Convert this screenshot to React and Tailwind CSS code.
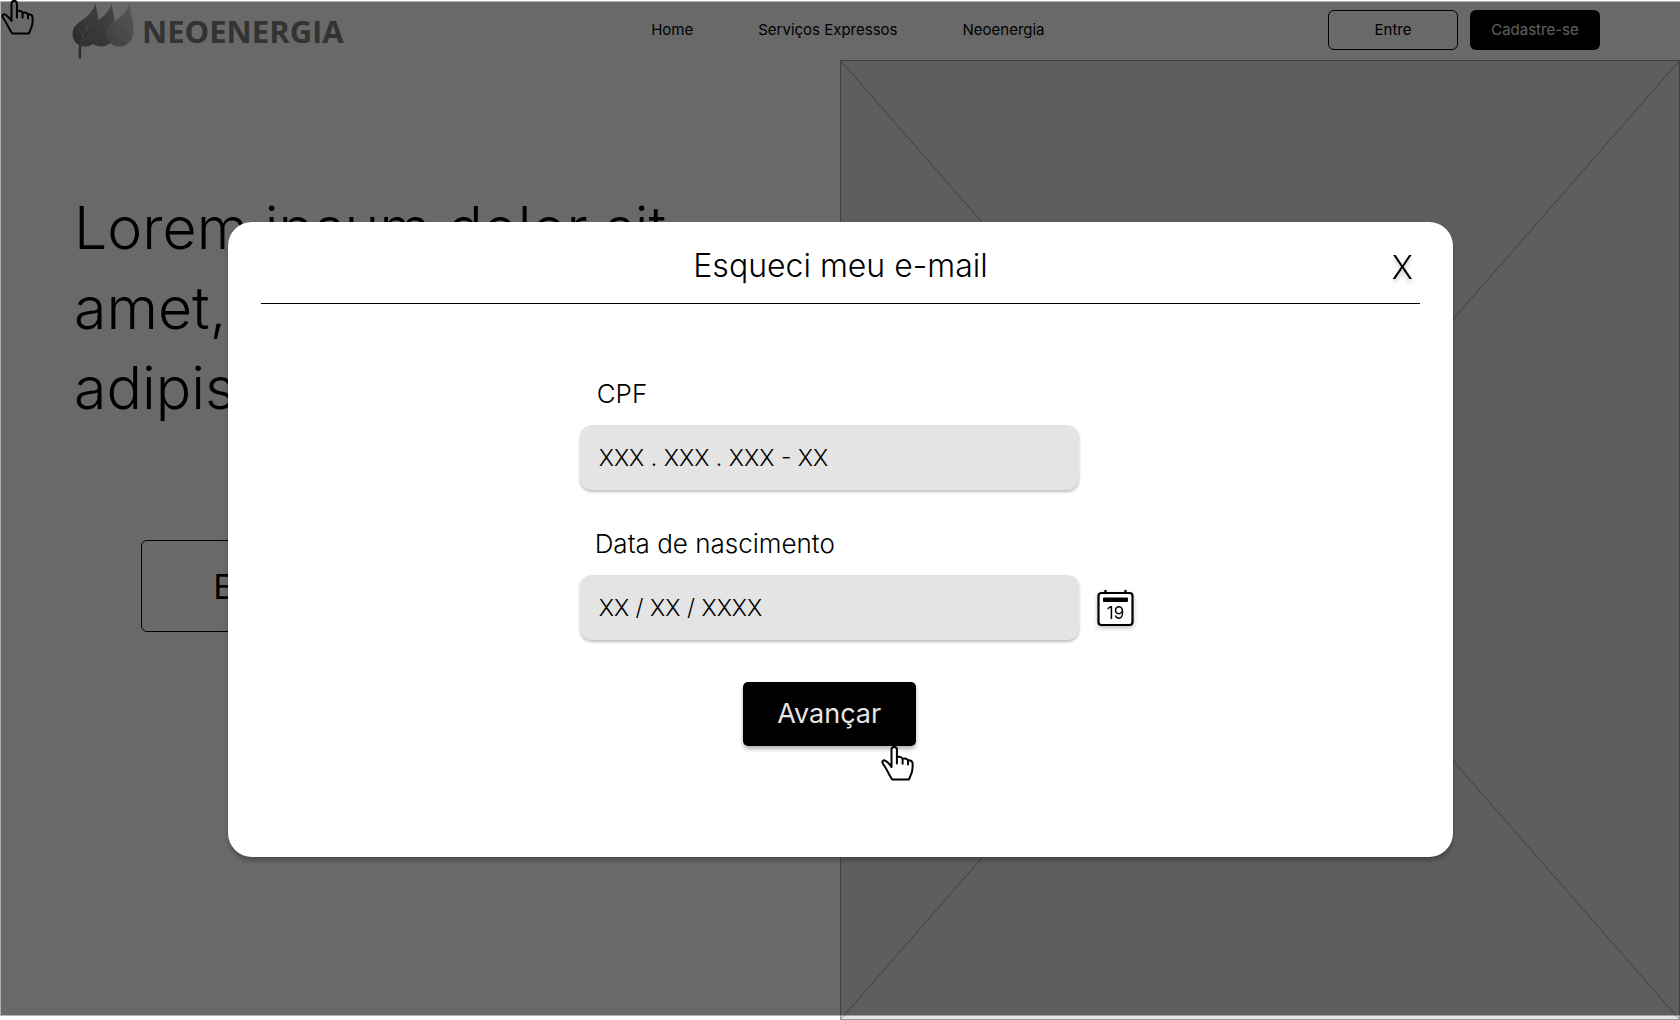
import React from "react";

function HandCursor({ className }) {
  return (
    <svg viewBox="0 0 34 36" fill="none" stroke="black" strokeWidth="2" strokeLinejoin="round" strokeLinecap="round" className={className} aria-hidden="true">
      <path d="M10.5 21V3.6a2.7 2.7 0 0 1 5.4 0V11c2.6-.6 4.900.2 5.700 1.700 2.500-.6 4.600.2 5.400 1.700 2.800-.3 4.700 1 4.700 3.800 0 4.600-.3 8.200-2.300 11.600L28 33.500H11.200L8.600 29.200C7 26 4.500 21.500 2 17.800 .4 15.200 2.400 13.600 4.600 14.800 7 16.200 9 18.600 10.500 21z" />
      <path d="M15.900 11v6.500M21.600 12.700v5M27 14.400v4" />
    </svg>
  );
}

function Leaf({ x, fill }) {
  return (
    <path
      transform={`translate(${x} 0)`}
      d="M23.500 2C24.500 10 28 20 27.500 32 26.500 40 20.500 45.500 13.500 45.500 6 45.500 .5 40 .5 33 .5 26 5 22.500 12.500 17.500 18.500 13 22 8 23.500 2z"
      fill={fill}
    />
  );
}

function Logo() {
  return (
    <a href="#inicio" className="flex items-start text-[#7c7c7c]" aria-label="Neoenergia">
      <svg viewBox="0 0 64 58" className="h-[58px] w-16 shrink-0" aria-hidden="true">
        <defs>
          <linearGradient id="leafDark" x1="0" y1="1" x2="1" y2="0">
            <stop offset="0" stopColor="#686868" />
            <stop offset="1" stopColor="#a0a0a0" />
          </linearGradient>
          <linearGradient id="leafMid" x1="0" y1="1" x2="0.6" y2="0">
            <stop offset="0" stopColor="#747474" />
            <stop offset="1" stopColor="#a8a8a8" />
          </linearGradient>
          <linearGradient id="leafLight" x1="0" y1="1" x2="0.6" y2="0">
            <stop offset="0" stopColor="#969696" />
            <stop offset="1" stopColor="#cfcfcf" />
          </linearGradient>
        </defs>
        <Leaf x={16} fill="url(#leafMid)" />
        <Leaf x={34} fill="url(#leafLight)" />
        <Leaf x={0} fill="url(#leafDark)" />
        <path d="M8.500 46C9 38 13 29 21 16M11 36l-4-8M15.500 28l-2-6M10 40l10-6" fill="none" stroke="#a6a6a6" strokeWidth="0.800" />
        <path d="M8 57.500C7.400 53 7.600 49 8.500 44" fill="none" stroke="#686868" strokeWidth="2.400" />
      </svg>
      <span className="ml-1.5 pt-2 font-['Open_Sans'] text-[31px] leading-[44px] font-bold">NEOENERGIA</span>
    </a>
  );
}

function Header() {
  return (
    <header className="flex h-[60px] items-center justify-between pr-20 pl-[72px]">
      <Logo />
      <nav className="ml-6 flex gap-[65px] text-[15px]">
        <a href="#home">Home</a>
        <a href="#servicos">Serviços Expressos</a>
        <a href="#neoenergia">Neoenergia</a>
      </nav>
      <div className="flex gap-3 text-[15px]">
        <button className="h-10 w-[130px] rounded-md border border-black">Entre</button>
        <button className="h-10 w-[130px] rounded-md bg-black text-[#e5e5e5]">Cadastre-se</button>
      </div>
    </header>
  );
}

function Hero() {
  return (
    <main className="grid flex-1 grid-cols-2">
      <section className="pt-[128px] pl-[74px]">
        <h1 className="w-[660px] text-[59px] leading-[80px] font-light">
          Lorem ipsum dolor sit amet, consectetur adipiscing elit
        </h1>
        <button className="mt-[112px] ml-[67px] h-[92px] w-[228px] rounded-md border border-black text-[34px]">Entre</button>
      </section>
      <div className="border border-[#999] bg-[#e5e5e5]">
        <svg className="block h-full w-full" viewBox="0 0 100 100" preserveAspectRatio="none" stroke="#999" aria-hidden="true">
          <path d="M0 0L100 100M100 0L0 100" vectorEffect="non-scaling-stroke" />
        </svg>
      </div>
    </main>
  );
}

function CalendarIcon() {
  return (
    <svg viewBox="0 0 37 38" className="h-[38px] w-[37px] drop-shadow-[0_2px_2px_rgba(0,0,0,0.25)]" aria-hidden="true">
      <rect x="1.500" y="4" width="34" height="32" rx="3" fill="white" stroke="black" strokeWidth="2.200" />
      <path d="M8.500 2v2M28.500 2v2" stroke="black" strokeWidth="2.400" strokeLinecap="round" />
      <rect x="6" y="8.500" width="25" height="4.500" rx="1" fill="black" />
      <text x="18.500" y="30" textAnchor="middle" fontSize="17" fontFamily="Inter, sans-serif">19</text>
    </svg>
  );
}

const fieldClass =
  "h-[65px] w-[499px] rounded-xl bg-[#e4e4e4] px-[19px] text-[23px] font-light text-black shadow-[0_2px_3px_rgba(0,0,0,0.25)] outline-none placeholder:text-black placeholder:opacity-100";

function ForgotEmailDialog() {
  return (
    <section role="dialog" aria-labelledby="dialog-title" className="min-h-[635px] w-[73%] rounded-3xl bg-white px-[33px] pb-[111px] shadow-[0_4px_4px_rgba(0,0,0,0.25)]">
      <div className="grid h-[82px] grid-cols-[40px_1fr_40px] items-center border-b border-black pt-1.5">
        <span />
        <h2 id="dialog-title" className="text-center text-[32px] font-light">Esqueci meu e-mail</h2>
        <button aria-label="Fechar" className="pt-1 pl-1 text-center text-[32px] font-light drop-shadow-[0_3px_2px_rgba(0,0,0,0.25)]">X</button>
      </div>
      <form className="ml-[319px] flex w-max flex-col pt-[70px]" onSubmit={(e) => e.preventDefault()}>
        <label htmlFor="cpf" className="ml-[17px] text-[26px] leading-10 font-light">CPF</label>
        <input id="cpf" placeholder="XXX . XXX . XXX - XX" className={`${fieldClass} mt-[11px]`} />
        <label htmlFor="birth" className="mt-[34px] ml-[15px] text-[26px] leading-10 font-light">Data de nascimento</label>
        <div className="mt-[11px] flex items-center gap-[18px]">
          <input id="birth" placeholder="XX / XX / XXXX" className={fieldClass} />
          <button type="button" aria-label="Abrir calendário">
            <CalendarIcon />
          </button>
        </div>
        <div className="relative mt-[42px] ml-[163px] w-max">
          <button type="submit" className="block h-16 w-[173px] rounded-[5px] bg-black text-[27px] text-[#e5e5e5] shadow-[0_3px_4px_rgba(0,0,0,0.3)]">Avançar</button>
          <HandCursor className="pointer-events-none absolute top-full left-[138px] h-9 w-[34px] fill-white" />
        </div>
      </form>
    </section>
  );
}

export default function App() {
  return (
    <div className="relative flex min-h-screen flex-col overflow-hidden bg-white font-['Inter',sans-serif] text-black antialiased">
      <Header />
      <Hero />
      <HandCursor className="absolute top-0 left-px h-9 w-[34px]" />
      <div className="absolute top-px right-0 bottom-1 left-0 flex items-start justify-center border border-r-0 border-black/30 bg-black/59 bg-clip-padding pt-[220px]">
        <ForgotEmailDialog />
      </div>
    </div>
  );
}
